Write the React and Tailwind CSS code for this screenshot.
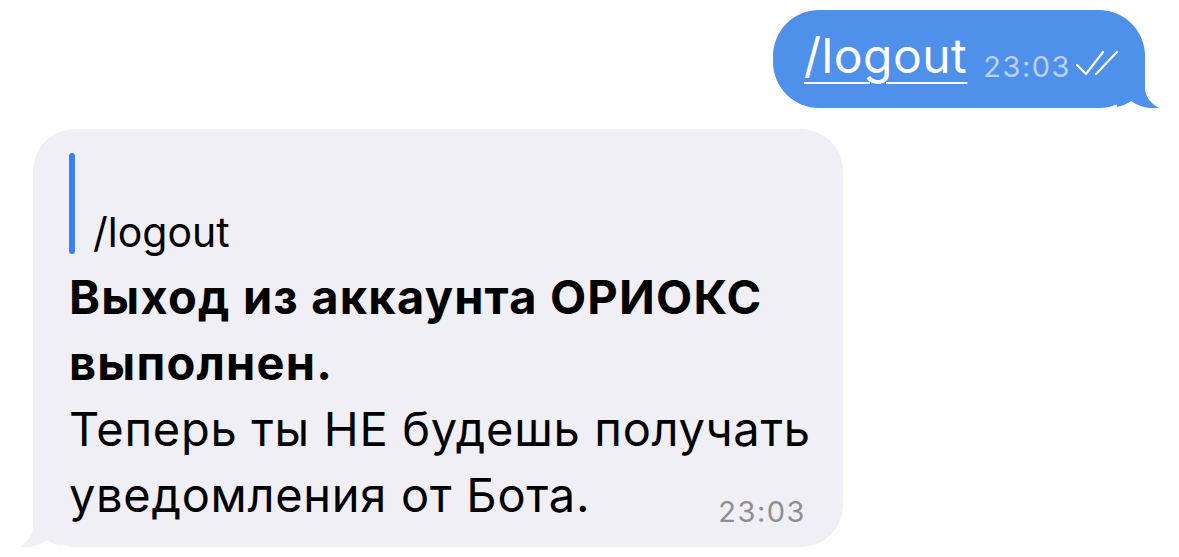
import React from "react";

function DoubleCheck() {
  return (
    <svg width="44" height="28" viewBox="0 0 44 28" fill="none" className="shrink-0">
      <path d="M2 15 L11 24 L28 2" stroke="white" strokeWidth="2.2" strokeLinecap="round" strokeLinejoin="round" />
      <path d="M21 24 L42 2" stroke="white" strokeWidth="2.2" strokeLinecap="round" />
    </svg>
  );
}

const App = () => {
  return (
    <div className="w-[1179px] h-[557px] bg-white flex flex-col overflow-hidden font-['Inter',sans-serif]">
      {/* outgoing */}
      <div className="self-end mr-[34px] mt-[10px] relative">
        <div className="relative z-10 h-[98px] rounded-[46px] bg-[#4f90ea] pl-[31px] pr-[26px] flex items-center">
          <span className="text-white text-[48px] leading-none underline decoration-[2px] underline-offset-[9px] tracking-[0.5px] -mt-[6px]">
            /logout
          </span>
          <span className="ml-[16px] mt-[14px] text-[29px] leading-none tracking-[1.5px] text-[#b9d2f6]">23:03</span>
          <span className="ml-[4px] mt-[10px]">
            <DoubleCheck />
          </span>
        </div>
        {/* tail */}
        <svg className="absolute right-[-16px] bottom-0 z-0" width="44" height="50" viewBox="0 0 44 50">
          <path d="M0 0 H28 V30 C28 38 33 45 42 50 C33 51 22 49 14 43 C10 46 5 48 0 49 Z" fill="#4f90ea" />
        </svg>
      </div>

      {/* incoming */}
      <div className="ml-[33px] mt-[21px] relative w-[810px]">
        <div className="relative z-10 rounded-[42px] bg-[#f0eff5] pl-[36px] pr-[37px] pt-[24px] pb-[19px] text-black">
          <div className="flex h-[101px]">
            <div className="w-[6px] rounded-full bg-[#3a7ff6]" />
            <div className="flex items-end pl-[18px]">
              <span className="text-[41px] leading-none mb-[1px]">/logout</span>
            </div>
          </div>
          <div className="mt-[10px] text-[47px] leading-[66px] whitespace-nowrap">
            <div className="font-bold tracking-[1.2px]">Выход из аккаунта ОРИОКС</div>
            <div className="font-bold tracking-[1.2px]">выполнен.</div>
            <div className="tracking-[0.7px]">Теперь ты НЕ будешь получать</div>
            <div className="flex items-end justify-between">
              <span className="tracking-[0.7px]">уведомления от Бота.</span>
              <span className="text-[29px] leading-none tracking-[1.5px] text-[#8e8e93] mb-[2px]">23:03</span>
            </div>
          </div>
        </div>
        {/* tail */}
        <svg className="absolute left-[-16px] bottom-0 z-0" width="44" height="50" viewBox="0 0 44 50">
          <path d="M44 0 H16 V30 C16 38 11 45 2 50 C11 51 22 49 30 43 C34 46 39 48 44 49 Z" fill="#f0eff5" />
        </svg>
      </div>
    </div>
  );
};

export default App;
